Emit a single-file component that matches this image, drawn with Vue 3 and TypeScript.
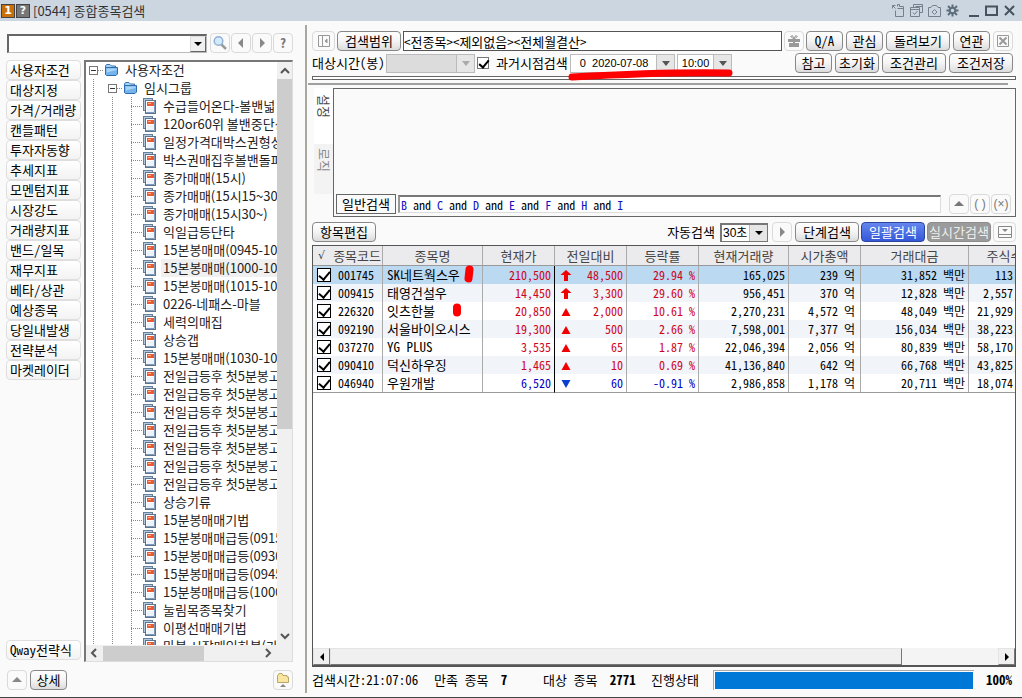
<script setup lang="ts">
import { ref } from 'vue'

interface Stock {
  code: string
  name: string
  price: string
  trend: 'limit' | 'up' | 'down'
  change: string
  rate: string
  volume: string
  cap: string
  amount: string
  shares: string
  checked: boolean
}

const categories: string[] = [
  '사용자조건', '대상지정', '가격/거래량', '캔들패턴', '투자자동향', '추세지표', '모멘텀지표', '시장강도',
  '거래량지표', '밴드/일목', '재무지표', '베타/상관', '예상종목', '당일내발생', '전략분석', '마켓레이더',
]

const conditions: string[] = [
  '수급들어온다-볼밴넓', '120or60위 볼밴중단상', '일정가격대박스권형성', '박스권매집후볼밴돌파', '종가매매(15시)',
  '종가매매(15시15~30', '종가매매(15시30~)', '익일급등단타', '15본봉매매(0945-10', '15본봉매매(1000-10',
  '15본봉매매(1015-10', '0226-네패스-마블', '세력의매집', '상승갭', '15본봉매매(1030-10',
  '전일급등후 첫5분봉고', '전일급등후 첫5분봉고', '전일급등후 첫5분봉고', '전일급등후 첫5분봉고',
  '전일급등후 첫5분봉고', '전일급등후 첫5분봉고', '전일급등후 첫5분봉고', '상승기류', '15분봉매매기법',
  '15분봉매매급등(0915', '15분봉매매급등(0930', '15분봉매매급등(0945', '15분봉매매급등(1000',
  '눌림목종목찾기', '이평선매매기법', '마봉 시장매입하봉(가',
]

const stocks = ref<Stock[]>([
  { code: '001745', name: 'SK네트웍스우', price: '210,500', trend: 'limit', change: '48,500', rate: '29.94 %', volume: '165,025', cap: '239 억', amount: '31,852 백만', shares: '113,', checked: true },
  { code: '009415', name: '태영건설우', price: '14,450', trend: 'limit', change: '3,300', rate: '29.60 %', volume: '956,451', cap: '370 억', amount: '12,828 백만', shares: '2,557,', checked: true },
  { code: '226320', name: '잇츠한불', price: '20,850', trend: 'up', change: '2,000', rate: '10.61 %', volume: '2,270,231', cap: '4,572 억', amount: '48,049 백만', shares: '21,929,', checked: true },
  { code: '092190', name: '서울바이오시스', price: '19,300', trend: 'up', change: '500', rate: '2.66 %', volume: '7,598,001', cap: '7,377 억', amount: '156,034 백만', shares: '38,223,', checked: true },
  { code: '037270', name: 'YG PLUS', price: '3,535', trend: 'up', change: '65', rate: '1.87 %', volume: '22,046,394', cap: '2,056 억', amount: '80,839 백만', shares: '58,170,', checked: true },
  { code: '090410', name: '덕신하우징', price: '1,465', trend: 'up', change: '10', rate: '0.69 %', volume: '41,136,840', cap: '642 억', amount: '66,768 백만', shares: '43,825,', checked: true },
  { code: '046940', name: '우원개발', price: '6,520', trend: 'down', change: '60', rate: '-0.91 %', volume: '2,986,858', cap: '1,178 억', amount: '20,711 백만', shares: '18,074,', checked: true },
])

const arrows: Record<Stock['trend'], string> = {
  limit: 'M6 1L11.500 6H8V12H4V6H.5Z',
  up: 'M6 3L10.500 11H1.500Z',
  down: 'M1.500 3H10.500L6 11Z',
}

const columns = ['종목명', '현재가', '전일대비', '등락률', '현재거래량', '시가총액', '거래대금', '주식수']
const letters = ['B', 'C', 'D', 'E', 'F', 'H', 'I']
const past = ref(true)
const keyword = ref('')
const range = ref('<전종목><제외없음><전체월결산>')
const selected = 9
</script>

<template>
  <div class="window">
    <header class="titlebar">
      <span class="badge one">1</span>
      <button class="badge help" aria-label="도움말">?</button>
      <h1>[0544] 종합종목검색</h1>
      <div class="winbtns">
        <button aria-label="분리"><svg width="15" height="15" viewBox="0 0 15 15" class="thin"><path d="M1.500 5.500V2.500H4.500M1.500 2.500L4.500 5.500M6.500 3.500V1.500H8.500V3.500H12.500V13.500H4.500V7.500M6.500 5.500H12.500" /></svg></button>
        <button aria-label="복사"><svg width="15" height="15" viewBox="0 0 15 15" class="thin"><path d="M4.500 4V1.500H13.500V9.500H11M1.500 4.500H10.500V13.500H1.500ZM1.500 6.500H10.500M4 9.500L5.500 11.500L8.500 8M6.500 3.500H13" /></svg></button>
        <button aria-label="캡처"><svg width="15" height="15" viewBox="0 0 15 15" class="thin"><path d="M1.500 4.500H4L5.500 2.500H9.500L11 4.500H13.500V13.500H1.500ZM7.500 6.500L10 9L7.500 11.500L5 9Z" /></svg></button>
        <button class="setup" aria-label="설정"><svg width="15" height="15" viewBox="0 0 15 15" class="gear"><circle cx="7.500" cy="7.500" r="2.800" /><path d="M7.500 1.500V4M7.500 11V13.500M1.500 7.500H4M11 7.500H13.500M3 3L5 5M10 10L12 12M3 12L5 10M10 5L12 3" /></svg></button>
        <button aria-label="최소화"><svg width="15" height="15" viewBox="0 0 15 15" class="bold"><path d="M3 13H13" /></svg></button>
        <button aria-label="최대화"><svg width="15" height="15" viewBox="0 0 15 15" class="bold"><path d="M2 3.500H13V12H2Z" /></svg></button>
        <button aria-label="닫기"><svg width="15" height="15" viewBox="0 0 15 15" class="bold"><path d="M3 3L12 12M12 3L3 12" /></svg></button>
      </div>
    </header>

    <div class="body">
      <aside class="left">
        <div class="search">
          <div class="combo">
            <input v-model="keyword" type="text" aria-label="조건 찾기" />
            <button class="drop" aria-label="목록 열기"><svg width="8" height="4" viewBox="0 0 8 4"><path d="M0 0H8L4 4Z" /></svg></button>
          </div>
          <button class="soft" aria-label="검색"><svg width="16" height="16" viewBox="0 0 16 16"><path d="M9 9L14 14" stroke="#9a9a9a" stroke-width="2.500" /><circle cx="6.500" cy="6" r="4.300" fill="#d4e9fa" stroke="#8fb2d6" stroke-width="1.500" /></svg></button>
          <button class="soft" aria-label="이전"><svg width="14" height="14" viewBox="0 0 14 14"><path d="M9 2V12L4 7Z" fill="#888" /></svg></button>
          <button class="soft" aria-label="다음"><svg width="14" height="14" viewBox="0 0 14 14"><path d="M5 2V12L10 7Z" fill="#888" /></svg></button>
          <button class="soft q" aria-label="도움말">?</button>
        </div>

        <div class="explorer">
          <nav class="cats">
            <button v-for="c in categories" :key="c">{{ c }}</button>
            <button class="last">Qway전략식</button>
          </nav>

          <div class="treebox">
            <ul class="tree">
              <li class="node root">
                <span class="toggle"></span><i class="dash"></i>
                <svg class="folder" width="15" height="14" viewBox="0 0 15 14"><path d="M1.500 12V3L2.500 1.500H6L7.500 3H11.500V5" fill="#a9d3f5" stroke="#3c76b5" /><path d="M1.500 4.500H13.500V11L12 12.500H2.500L1.500 11.500Z" fill="#74b4ec" stroke="#2f6cae" /><path d="M2.500 5.500H12.500V7L3 9.500Z" fill="#a8d4f8" /></svg>
                <span>사용자조건</span>
              </li>
              <li class="node group">
                <span class="toggle"></span><i class="dash"></i>
                <svg class="folder" width="15" height="14" viewBox="0 0 15 14"><path d="M1.500 12V3L2.500 1.500H6L7.500 3H11.500V5" fill="#a9d3f5" stroke="#3c76b5" /><path d="M1.500 4.500H13.500V11L12 12.500H2.500L1.500 11.500Z" fill="#74b4ec" stroke="#2f6cae" /><path d="M2.500 5.500H12.500V7L3 9.500Z" fill="#a8d4f8" /></svg>
                <span>임시그룹</span>
              </li>
              <li v-for="(c, i) in conditions" :key="i" class="node leaf">
                <i class="dash"></i>
                <svg width="13" height="16" viewBox="0 0 13 16"><rect x=".5" y=".5" width="9" height="12" fill="#b4c9dc" stroke="#667f99" /><rect x="2.500" y="2.500" width="10" height="13" fill="#fff" stroke="#5b748e" /><path d="M11.500 3V14.500H3" fill="none" stroke="#7f9ab8" /><rect x="4" y="4" width="7" height="4" fill="#ec5a34" /><path d="M5 5.500H8" stroke="#ffb08c" /><rect x="4" y="9" width="7" height="5" fill="#edf3fa" /></svg>
                <span :class="{ on: i === selected }">{{ c }}</span>
              </li>
            </ul>
            <div class="vbar">
              <svg width="10" height="8" viewBox="0 0 10 8"><path d="M1 6L5 2L9 6" /></svg>
              <span class="vthumb"></span>
              <svg width="10" height="8" viewBox="0 0 10 8"><path d="M1 2L5 6L9 2" /></svg>
            </div>
            <div class="hbar">
              <svg width="8" height="10" viewBox="0 0 8 10"><path d="M6 1L2 5L6 9" /></svg>
              <span class="hthumb"></span>
              <svg width="8" height="10" viewBox="0 0 8 10"><path d="M2 1L6 5L2 9" /></svg>
            </div>
          </div>
        </div>

        <div class="leftfoot">
          <button class="soft" aria-label="위로"><svg width="12" height="8" viewBox="0 0 12 8"><path d="M6 1L11 6H1Z" fill="#888" /></svg></button>
          <button class="btn">상세</button>
          <button class="soft end" aria-label="폴더"><svg width="14" height="16" viewBox="0 0 14 16"><path d="M1.500 10.500V4L3 1.500H6L7 3.500H11V5H12.500V10.500Z" fill="#f8e6a0" stroke="#baa56a" /><path d="M7 12L10 15H4Z" fill="#888" /></svg></button>
        </div>
      </aside>

      <main class="right">
        <div class="bar">
          <button class="soft w23" aria-label="패널 접기"><svg width="14" height="14" viewBox="0 0 14 14" fill="none" stroke="#999"><path d="M1.500 1.500H12.500V12.500H1.500ZM5.500 1.500V12.500" /><path d="M10 5V9L8 7Z" fill="#999" /></svg></button>
          <button class="btn w64">검색범위</button>
          <input v-model="range" class="range" type="text" aria-label="검색범위" />
          <button class="soft" aria-label="선물"><svg width="14" height="14" viewBox="0 0 14 14"><path d="M1 5H13V8H1ZM2 9H6V13H2ZM8 9H12V13H8ZM6 5H8V13H6Z" fill="#999" /><path d="M7 5L3.500 2.500L5.500 1.500L7 5L8.500 1.500L10.500 2.500Z" fill="none" stroke="#999" /></svg></button>
          <div class="tools">
            <button class="btn w37">Q/A</button><button class="btn w37">관심</button><button class="btn w64">돌려보기</button><button class="btn w37">연관</button>
            <button class="soft" aria-label="엑셀"><svg width="14" height="14" viewBox="0 0 14 14" fill="none" stroke="#999"><path d="M1.500 1.500H12.500V12.500H1.500Z" /><path d="M3.500 3.500L10.500 10.500M10.500 3.500L3.500 10.500" stroke-width="2" /></svg></button>
          </div>
        </div>

        <div class="bar second">
          <label for="span" class="spanlabel">대상시간(봉)</label>
          <div class="pick off"><select id="span" disabled><option></option></select><svg width="8" height="5" viewBox="0 0 8 5"><path d="M0 0H8L4 5Z" /></svg></div>
          <label class="past"><input v-model="past" type="checkbox" class="tick small" /><span>과거시점검색</span></label>
          <div class="pick date"><select aria-label="날짜"><option>&nbsp;0&nbsp; 2020-07-08</option></select><svg width="8" height="5" viewBox="0 0 8 5"><path d="M0 0H8L4 5Z" /></svg></div>
          <div class="pick time"><select aria-label="시간"><option>10:00</option></select><svg width="8" height="5" viewBox="0 0 8 5"><path d="M0 0H8L4 5Z" /></svg></div>
          <svg class="underline" width="168" height="16" viewBox="0 0 168 16"><path d="M5 11C60 8 110 6 162 7" /></svg>
          <div class="tools">
            <button class="btn w37">참고</button><button class="btn w44">초기화</button><button class="btn w64">조건관리</button><button class="btn w64">조건저장</button>
          </div>
        </div>

        <div class="strip"></div>
        <hr class="split" />

        <section class="logic">
          <div class="tabs"><button class="active">설정</button><button>로직</button></div>
          <div class="canvas">
            <div class="formula">
              <button class="flat">일반검색</button>
              <div class="expr"><template v-for="(l, i) in letters" :key="l"><b>{{ l }}</b><template v-if="i < letters.length - 1"> and </template></template></div>
              <div class="ops">
                <button class="soft" aria-label="위로"><svg width="12" height="8" viewBox="0 0 12 8"><path d="M6 1L11 6H1Z" fill="#777" /></svg></button>
                <button class="soft">( )</button>
                <button class="soft">(×)</button>
              </div>
            </div>
          </div>
        </section>

        <div class="bar actions">
          <button class="btn w64">항목편집</button>
          <div class="tools">
            <label for="auto">자동검색</label>
            <div class="pick auto"><select id="auto"><option>30초</option></select><svg width="8" height="4" viewBox="0 0 8 4"><path d="M0 0H8L4 4Z" /></svg></div>
            <button class="soft run" aria-label="실행"><svg width="14" height="14" viewBox="0 0 14 14"><path d="M5 2V12L10 7Z" fill="#888" /></svg></button>
            <button class="btn w64">단계검색</button><button class="btn w64 blue">일괄검색</button><button class="btn w64 gray">실시간검색</button>
            <button class="soft w23" aria-label="접기"><svg width="14" height="12" viewBox="0 0 14 12" fill="none" stroke="#888"><path d="M.5 .5H13.500V11.500H.5ZM.5 8.500H13.500" /><path d="M4 3H10L7 6Z" fill="#888" stroke="none" /></svg></button>
          </div>
        </div>

        <section class="grid">
          <div class="scroller">
            <table>
              <colgroup><col class="c70" /><col class="c100" /><col class="c72" /><col class="c72" /><col class="c72" /><col class="c90" /><col class="c72" /><col class="c108" /><col class="c72" /></colgroup>
              <thead>
                <tr><th><span class="first"><span class="root-sign">√</span><span>종목코드</span></span></th><th v-for="c in columns" :key="c">{{ c }}</th></tr>
              </thead>
              <tbody>
                <tr v-for="s in stocks" :key="s.code" :class="s.trend">
                  <td><label class="codecell"><input v-model="s.checked" type="checkbox" class="tick" /><span>{{ s.code }}</span></label></td>
                  <td class="name">{{ s.name }}</td>
                  <td class="num tone price">{{ s.price }}</td>
                  <td class="num tone"><span class="diff"><svg width="12" height="13" viewBox="0 0 12 13"><path :d="arrows[s.trend]" /></svg>{{ s.change }}</span></td>
                  <td class="num tone">{{ s.rate }}</td>
                  <td class="num">{{ s.volume }}</td>
                  <td class="num cap">{{ s.cap }}</td>
                  <td class="num">{{ s.amount }}</td>
                  <td class="num shares">{{ s.shares }}</td>
                </tr>
              </tbody>
            </table>
            <svg class="mark m1" width="10" height="18" viewBox="0 0 10 18"><path d="M5.500 4.500L4.500 13.500" /></svg>
            <svg class="mark m2" width="10" height="14" viewBox="0 0 10 14"><path d="M5 4.500V9.500" /></svg>
          </div>
          <div class="gridbar">
            <button aria-label="왼쪽"><svg width="6" height="8" viewBox="0 0 6 8"><path d="M5 0V8L1 4Z" /></svg></button>
            <span class="gthumb"></span><span class="gtrack"></span>
            <button aria-label="오른쪽"><svg width="6" height="8" viewBox="0 0 6 8"><path d="M1 0V8L5 4Z" /></svg></button>
          </div>
        </section>

        <footer class="status">
          <span class="s1">검색시간:21:07:06</span>
          <span class="s2">만족 종목 <b>7</b></span>
          <span class="s3">대상 종목 <b>2771</b></span>
          <span>진행상태</span>
          <div class="progress" role="progressbar" aria-valuenow="100"><div :style="{ width: '100%' }"></div></div>
          <b>100%</b>
        </footer>
      </main>
    </div>
  </div>
</template>

<style>
body {
  background: #fafafa;
}
</style>

<style scoped>
* {
  box-sizing: border-box;
}
.window {
  height: 100vh;
  min-height: 600px;
  display: flex;
  flex-direction: column;
  background: #fafafa;
  border-bottom: 1px solid #444;
  font-family: "Noto Sans Mono CJK KR", "Noto Sans CJK KR", sans-serif;
  font-size: 13px;
  line-height: 18px;
  color: #000;
  overflow: hidden;
  white-space: nowrap;
}
button, input, select {
  font: inherit;
  color: inherit;
  margin: 0;
  padding: 0;
}
button {
  display: inline-flex;
  align-items: center;
  justify-content: center;
  flex: none;
}
svg {
  display: block;
  flex: none;
}

.titlebar {
  flex: none;
  height: 21px;
  display: flex;
  align-items: center;
  gap: 1px;
  padding: 0 5px 0 1px;
  background: #cbd6e1;
}
.badge {
  width: 14px;
  height: 14px;
  display: flex;
  align-items: center;
  justify-content: center;
  border: 1px solid #444;
  color: #fff;
  font: bold 11px "DejaVu Sans", sans-serif;
}
.one {
  background: #c8700a;
}
.help {
  background: #777;
}
h1 {
  margin: 0 0 0 2px;
  font: 13px "Noto Sans CJK KR", sans-serif;
  line-height: 20px;
  color: #333;
}
.winbtns {
  margin-left: auto;
  display: flex;
  gap: 3px;
}
.winbtns button {
  background: none;
  border: 0;
}
.winbtns .setup {
  margin-right: 3px;
}
.winbtns svg {
  fill: none;
  stroke: #74808c;
}
.winbtns .gear {
  stroke: #5d6c7b;
  stroke-width: 2;
}
.winbtns .bold {
  stroke: #46525e;
  stroke-width: 2;
}

.body {
  flex: 1;
  min-height: 0;
  display: flex;
  padding: 4px 0;
}
.left {
  flex: none;
  width: 307px;
  display: flex;
  flex-direction: column;
  padding: 8px 12px 3px 6px;
  border-right: 2px solid #aaa79c;
}
.search {
  display: flex;
  gap: 1px;
}
.combo {
  flex: 1;
  display: flex;
  height: 19px;
  margin: 1px 2px 0 1px;
  background: #fff;
  border: 1px solid #bbb;
  border-top: 2px solid #666;
  border-left: 2px solid #666;
}
.combo input {
  flex: 1;
  min-width: 0;
  border: 0;
  background: none;
}
.drop {
  width: 16px;
  background: #f0f0f0;
  border: 1px solid #ddd;
  border-right-color: #666;
  border-bottom-color: #666;
}
.soft {
  width: 20px;
  height: 20px;
  background: #fafafa;
  border: 1px solid #dadada;
  border-radius: 4px;
  color: #777;
}
.soft.w23 {
  width: 23px;
}
.q {
  font-weight: bold;
}
.explorer {
  flex: 1;
  min-height: 0;
  display: flex;
  gap: 3px;
  margin-top: 7px;
}
.cats {
  width: 75px;
  display: flex;
  flex-direction: column;
}
.cats button {
  height: 20px;
  justify-content: flex-start;
  padding-left: 3px;
  background: linear-gradient(#fff, #f3f3f3);
  border: 1px solid #dedede;
  border-radius: 4px;
}
.cats .last {
  margin-top: auto;
  margin-bottom: 2px;
}
.treebox {
  flex: 1;
  min-width: 0;
  display: grid;
  grid-template-columns: minmax(0, 1fr) 15px;
  grid-template-rows: minmax(0, 1fr) 16px;
  border: 1px solid #ddd;
  border-top: 2px solid #777;
  border-left: 2px solid #777;
  background: #fff;
  font: 13px "Noto Sans CJK KR", sans-serif;
}
.tree {
  margin: -1px 0 0;
  padding: 0;
  list-style: none;
  overflow: hidden;
}
.node {
  height: 18px;
  display: flex;
  align-items: center;
  line-height: 18px;
  color: #222;
  --dots: repeating-linear-gradient(#888 0 1px, transparent 1px 2px);
  background-repeat: no-repeat;
}
.root {
  padding-left: 3px;
}
.group {
  padding-left: 22px;
  background-image: var(--dots);
  background-size: 1px 100%;
  background-position: 7px 0;
}
.leaf {
  padding-left: 45px;
  background-image: var(--dots), var(--dots), var(--dots);
  background-size: 1px 100%;
  background-position: 7px 0, 26px 0, 45px 0;
}
.toggle {
  width: 9px;
  height: 9px;
  flex: none;
  border: 1px solid #777;
  background: linear-gradient(#333, #333) center / 5px 1px no-repeat #fff;
}
.dash {
  flex: none;
  width: 6px;
  height: 1px;
  background: repeating-linear-gradient(90deg, #888 0 1px, transparent 1px 2px);
}
.leaf .dash {
  width: 12px;
}
.node > span:last-child {
  margin-left: 5px;
  padding: 0 2px;
}
.node .folder + span:last-child {
  margin-left: 4px;
}
.on {
  background: #f0f0f0;
}
.vbar {
  display: flex;
  flex-direction: column;
  align-items: center;
  background: #f0f0f0;
  padding: 5px 0;
}
.vbar svg, .hbar svg {
  fill: none;
  stroke: #555;
  stroke-width: 2;
}
.vthumb {
  width: 15px;
  height: 350px;
  flex: 0 1 350px;
  margin: 4px 0 auto;
  background: #cdcdcd;
}
.hbar {
  grid-column: 1 / -1;
  display: flex;
  align-items: center;
  padding: 0 20px 0 4px;
  background: #f0f0f0;
}
.hthumb {
  width: 101px;
  height: 15px;
  margin: 0 auto 0 5px;
  background: #cdcdcd;
}
.leftfoot {
  flex: none;
  display: flex;
  gap: 3px;
  padding: 8px 0 0 1px;
}
.end {
  margin-left: auto;
}
.btn {
  height: 20px;
  padding: 0 4px;
  min-width: 37px;
  background: linear-gradient(#fff, #f4f4f4 50%, #dcdcdc);
  border: 1px solid #888;
  border-radius: 4px;
}
.w37 {
  width: 37px;
}
.w44 {
  width: 44px;
}
.w64 {
  width: 64px;
}

.right {
  flex: 1;
  min-width: 0;
  display: flex;
  flex-direction: column;
  padding: 6px 6px 0 5px;
}
.bar {
  position: relative;
  flex: none;
  display: flex;
  align-items: center;
  gap: 2px;
  height: 20px;
}
.tools {
  margin-left: auto;
  display: flex;
  align-items: center;
  gap: 3px;
  padding-right: 3px;
}
.bar .btn {
  padding: 0;
}
.range {
  flex: 1;
  min-width: 0;
  height: 20px;
  border: 1px solid #555;
  background: #fff;
}
.second {
  margin-top: 2px;
}
.spanlabel {
  width: 72px;
}
.pick {
  position: relative;
  height: 19px;
  background: #fff;
  border: 1px solid #bbb;
}
.pick select {
  display: block;
  appearance: none;
  width: 100%;
  height: 16px;
  border: 0;
  background: none;
  font-family: "Liberation Sans", "Noto Sans CJK KR", sans-serif;
  font-size: 11px;
  line-height: 16px;
  opacity: 1;
}
.pick::after {
  content: "";
  position: absolute;
  inset: 0 0 0 auto;
  width: 17px;
  background: #e6e6e6;
  border-left: 1px solid #bbb;
}
.pick svg {
  position: absolute;
  z-index: 1;
  right: 4px;
  top: 6px;
  fill: #555;
}
.off {
  width: 89px;
  background: #dcdcdc;
}
.off svg {
  fill: #aaa;
}
.past {
  display: flex;
  align-items: center;
  gap: 7px;
}
.tick {
  appearance: none;
  position: relative;
  width: 14px;
  height: 14px;
  flex: none;
  border: 1px solid #000;
  background: #fff;
}
.tick:checked::after {
  content: "";
  position: absolute;
  left: 3px;
  top: 0;
  width: 5px;
  height: 9px;
  border: solid #000;
  border-width: 0 2px 2px 0;
  transform: rotate(40deg);
}
.small {
  width: 12px;
  height: 12px;
  border-color: #777;
}
.small:checked::after {
  height: 8px;
  width: 4px;
}
.date {
  width: 105px;
}
.date select {
  padding-left: 6px;
}
.time {
  width: 55px;
}
.time select {
  padding-left: 4px;
}
.underline {
  position: absolute;
  left: 255px;
  top: 13px;
  z-index: 2;
  fill: none;
  stroke: #f00;
  stroke-width: 7;
  stroke-linecap: round;
}
.strip {
  flex: none;
  height: 4px;
  margin-top: 3px;
  border: 1px solid #666;
  background: #fff;
}
.split {
  flex: none;
  width: calc(100% - 4px);
  height: 2px;
  margin: 3px 0 0 -4px;
  border: 0;
  background: #a0a0a0;
}
.logic {
  flex: none;
  height: 129px;
  display: flex;
  margin-top: 3px;
}
.tabs {
  width: 21px;
  padding-left: 2px;
  display: flex;
  flex-direction: column;
}
.tabs button {
  height: 50px;
  align-items: center;
  justify-content: flex-start;
  writing-mode: vertical-rl;
  text-orientation: sideways;
  padding-top: 4px;
  border: 0;
  background: #f3f3f3;
  color: #888;
}
.tabs .active {
  height: 56px;
  padding-top: 6px;
  background: #fff;
  color: #444;
}
.canvas {
  flex: 1;
  min-width: 0;
  display: flex;
  align-items: flex-end;
  border: 1px solid #666;
  padding: 2px;
}
.formula {
  flex: 1;
  display: flex;
  gap: 2px;
  align-items: center;
}
.flat {
  width: 60px;
  height: 20px;
  border: 1px solid #666;
  background: #fafafa;
}
.expr {
  flex: 1;
  height: 18px;
  font-size: 12px;
  line-height: 15px;
  padding-left: 1px;
  background: #fff;
  border: 1px solid #ddd;
  border-top: 2px solid #777;
  border-left: 2px solid #999;
  white-space: pre;
}
.expr b {
  font-weight: normal;
  color: #1212c0;
}
.ops {
  display: flex;
  gap: 1px;
  padding: 0 2px 0 6px;
}
.ops .soft {
  font-family: "Liberation Sans", sans-serif;
  font-size: 12px;
}
.actions {
  margin-top: 5px;
}
.actions .tools {
  gap: 2px;
  padding-right: 0;
}
.actions label {
  margin-right: 3px;
}
.auto {
  width: 48px;
  border: 2px solid #777;
  border-right-width: 1px;
  border-bottom-width: 1px;
}
.auto svg {
  fill: #000;
}
.auto select {
  font-size: 12px;
  padding-left: 1px;
}
.run {
  margin: 0 1px 0 2px;
}
.blue {
  background: linear-gradient(#6585ee, #3558d8);
  border-color: #2b459f;
  color: #fff;
}
.gray {
  background: #9b9b9b;
  border-color: #8c8c8c;
  color: #eee;
}
.grid {
  flex: 1;
  min-height: 0;
  display: flex;
  flex-direction: column;
  margin: 3px 0 0;
  border: 1px solid #555;
  border-bottom-width: 2px;
  background: #fff;
}
.scroller {
  position: relative;
  flex: 1;
  min-height: 0;
  overflow: hidden;
}
table {
  table-layout: fixed;
  border-collapse: separate;
  border-spacing: 0;
  width: 728px;
}
.c70 { width: 70px; }
.c72 { width: 72px; }
.c90 { width: 90px; }
.c100 { width: 100px; }
.c108 { width: 108px; }
th {
  height: 20px;
  padding: 0;
  background: #ebebee;
  font-weight: normal;
  color: #444;
  border-right: 1px solid #aaa;
  border-bottom: 1px solid #999;
}
.first {
  display: flex;
  justify-content: space-between;
  padding: 0 1px 0 5px;
}
.root-sign {
  font-family: "DejaVu Sans", sans-serif;
  font-size: 11px;
}
td {
  height: 18px;
  padding: 0 3px 0 4px;
  font-size: 12px;
  line-height: 18px;
  border-right: 1px solid #aaa;
}
.name {
  font-size: 13px;
}
tbody tr:nth-child(even) td {
  background: #f1f4f9;
}
tbody tr:first-child td {
  background: #bbd9f1;
}
tbody tr:last-child td {
  border-bottom: 1px solid #999;
}
.codecell {
  display: flex;
  align-items: center;
  gap: 7px;
}
.num {
  text-align: right;
}
.cap {
  padding-right: 5px;
}
.shares {
  padding-right: 21px;
}
td.price {
  border-right-color: #000;
}
.tone {
  color: #d0021b;
}
.down .tone {
  color: #0000c8;
}
.diff {
  display: flex;
  justify-content: space-between;
  align-items: center;
  padding-left: 1px;
}
.diff svg {
  fill: #f00000;
}
.down .diff svg {
  fill: #0a40d0;
}
.mark {
  position: absolute;
  fill: none;
  stroke: #f00;
  stroke-width: 8;
  stroke-linecap: round;
}
.m1 {
  left: 151px;
  top: 19px;
}
.m2 {
  left: 139px;
  top: 57px;
}
.gridbar {
  flex: none;
  height: 17px;
  display: flex;
  background: #f4f4f4;
}
.gridbar button {
  width: 17px;
  background: #f0f0f0;
  border: 1px solid #e4e4e4;
  border-right-color: #777;
  border-bottom-color: #777;
}
.gthumb {
  flex: 573;
  background: #f0f0f0;
  border: 1px solid #e4e4e4;
  border-right-color: #777;
  border-bottom: 1px solid #777;
}
.gtrack {
  flex: 96;
}
.status {
  flex: none;
  height: 26px;
  display: flex;
  align-items: center;
}
.status b {
  font-weight: bold;
}
.s1 {
  width: 122px;
}
.s2 {
  width: 109px;
}
.s2 b, .s3 b {
  margin-left: 6px;
}
.s3 {
  width: 108px;
}
.progress {
  flex: 1;
  height: 20px;
  margin: 0 12px 0 14px;
  padding: 1px;
  border-top: 1px solid #aaa;
  border-left: 1px solid #aaa;
}
.progress div {
  height: 100%;
  background: #0078d7;
}
.status > b {
  padding-right: 4px;
}
</style>
